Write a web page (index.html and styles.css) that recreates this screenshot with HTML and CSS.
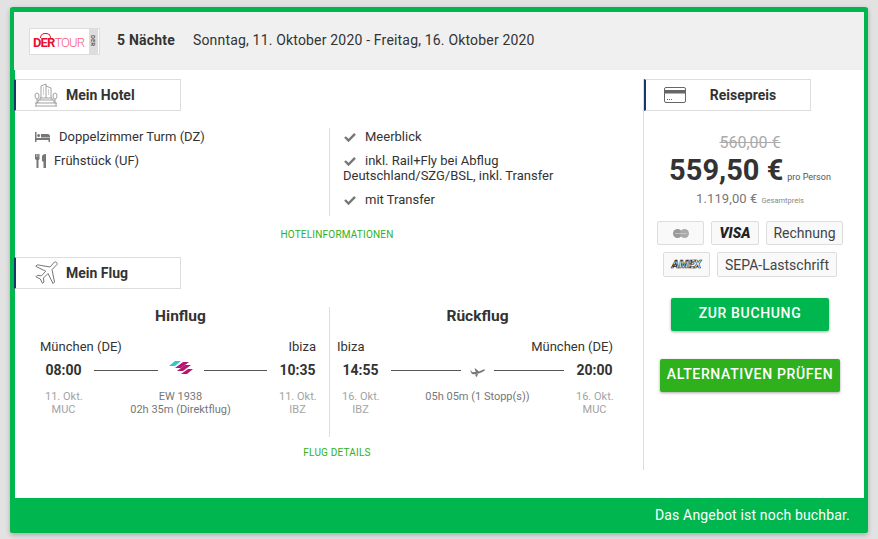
FILE: index.html

```html
<!DOCTYPE html>
<html lang="de">
<head>
    <meta charset="UTF-8">
    <meta name="viewport" content="width=device-width, initial-scale=1.0">
    <title>Angebot</title>
    <link rel="stylesheet" href="styles.css">
</head>
<body>
    <div class="card">
        <div class="head">
            <div class="logo">
                <span class="logo-name"><b>DER</b>TOUR</span>
                <span class="logo-strip">DER</span>
            </div>
            <span class="nights">5 Nächte</span>
            <span class="dates">Sonntag, 11. Oktober 2020 - Freitag, 16. Oktober 2020</span>
        </div>

        <div class="content">
            <div class="main">
                <div class="title">
                    <svg class="title-icon" width="24" height="24" viewBox="0 0 24 24" fill="none" stroke="#8a8a8a" stroke-width="0.8">
                        <path d="M7 15V3l5-2v14M12 3l5 2v10M9 5h1M9 7h1M9 9h1M9 11h1M14 7h1M14 9h1M14 11h1"/>
                        <path d="M1 20h22M2 23v-3M22 23v-3M4 20v-3h16v3M6 17v-2h12v2"/>
                        <ellipse cx="3" cy="13" rx="2" ry="3"/>
                        <ellipse cx="21" cy="13" rx="2" ry="3"/>
                        <path d="M3 16v4M21 16v4M1 23h22"/>
                    </svg>
                    <span>Mein Hotel</span>
                </div>
                <div class="hotel">
                    <ul class="hotel-left">
                        <li class="room">
                            <svg class="bed" width="15" height="10" viewBox="0 0 15 10" fill="#777">
                                <path d="M0 0h1.500v6H15v4h-1.500V8h-12v2H0z"/>
                                <circle cx="3.600" cy="3.400" r="1.500"/>
                                <path d="M6 2h6.500A2.500 2.500 0 0 1 15 4.500V5.500H6z"/>
                            </svg>
                            Doppelzimmer Turm (DZ)
                        </li>
                        <li class="meal">
                            <svg class="fork" width="11" height="14" viewBox="0 0 11 14" fill="#777">
                                <path d="M0 0h1.200v3h.4V0h1.200v3h.4V0h1.300v5L3.500 6.200V14H1.500V6.200L0 5z"/>
                                <path d="M7 7V2.500C7 1 8.500 0 10.500 0H11v14H8.500V8z"/>
                            </svg>
                            Frühstück (UF)
                        </li>
                    </ul>
                    <ul class="hotel-right">
                        <li><svg class="check" width="12" height="10" viewBox="0 0 12 10"><path d="M1 5l3.500 3.500L11 1.800" fill="none" stroke="#777" stroke-width="2.400"/></svg>Meerblick</li>
                        <li><svg class="check" width="12" height="10" viewBox="0 0 12 10"><path d="M1 5l3.500 3.500L11 1.800" fill="none" stroke="#777" stroke-width="2.400"/></svg>inkl. Rail+Fly bei Abflug Deutschland/SZG/BSL, inkl. Transfer</li>
                        <li><svg class="check" width="12" height="10" viewBox="0 0 12 10"><path d="M1 5l3.500 3.500L11 1.800" fill="none" stroke="#777" stroke-width="2.400"/></svg>mit Transfer</li>
                    </ul>
                </div>
                <a class="more hotel-more">HOTELINFORMATIONEN</a>

                <div class="title">
                    <svg class="title-icon" width="24" height="24" viewBox="0 0 24 24" fill="none" stroke="#666" stroke-width="0.9">
                        <path d="M20.500 1c1.500-.6 3.200.9 2.500 2.500L18 8.500 20.500 21 19 22.500l-5-10-4.500 4.500.4 4-1.400 1.400-2.200-4.400-4.400-2.200L3.300 14.400l4 .4 4.500-4.500-10-5L3.300 3.800 16 6z"/>
                    </svg>
                    <span>Mein Flug</span>
                </div>
                <div class="flights">
                    <div class="leg leg-out">
                        <h3>Hinflug</h3>
                        <div class="cities"><span>München (DE)</span><span>Ibiza</span></div>
                        <div class="times">
                            <div class="stop">
                                <strong>08:00</strong>
                                <small>11. Okt.<br>MUC</small>
                            </div>
                            <div class="route">
                                <div class="route-line">
                                    <i></i>
                                    <svg class="airline" width="26" height="14" viewBox="0 0 26 14">
                                        <path d="M1 6l6-5h6L7 6z" fill="#35c3d8"/>
                                        <path d="M7 8l8-6h6l-8 6z" fill="#b5176e"/>
                                        <path d="M9 11l8-6h6l-8 6z" fill="#b5176e"/>
                                        <path d="M13 14l7-5h5l-6 5z" fill="#b5176e"/>
                                    </svg>
                                    <i></i>
                                </div>
                                <small>EW 1938<br>02h 35m (Direktflug)</small>
                            </div>
                            <div class="stop">
                                <strong>10:35</strong>
                                <small>11. Okt.<br>IBZ</small>
                            </div>
                        </div>
                    </div>
                    <div class="leg leg-back">
                        <h3>Rückflug</h3>
                        <div class="cities"><span>Ibiza</span><span>München (DE)</span></div>
                        <div class="times">
                            <div class="stop">
                                <strong>14:55</strong>
                                <small>16. Okt.<br>IBZ</small>
                            </div>
                            <div class="route">
                                <div class="route-line">
                                    <i></i>
                                    <svg class="plane" width="15" height="10" viewBox="0 0 15 10" fill="#777">
                                        <path d="M0 3.500l1 .2 1.500 1.500 3.300-.4L4.500 1.500h1l3.500 3 4-1.800c1-.4 2-.2 2 .2 0 .6-3 2.300-5 3.100C8 7 4 7.500 2 7z"/>
                                        <path d="M5 7.500l3-.8-1 3H6z"/>
                                    </svg>
                                    <i></i>
                                </div>
                                <small>05h 05m (1 Stopp(s))</small>
                            </div>
                            <div class="stop">
                                <strong>20:00</strong>
                                <small>16. Okt.<br>MUC</small>
                            </div>
                        </div>
                    </div>
                </div>
                <a class="more flight-more">FLUG DETAILS</a>
            </div>

            <div class="side">
                <div class="title">
                    <svg class="title-icon card-icon" width="22" height="16" viewBox="0 0 22 16">
                        <rect x="0.500" y="0.500" width="21" height="15" rx="1.500" fill="none" stroke="#666"/>
                        <rect x="0.500" y="3" width="21" height="3.500" fill="#666"/>
                        <path d="M3 12.500h1M5 12.500h1M7 12.500h1" stroke="#666"/>
                    </svg>
                    <span class="title-center">Reisepreis</span>
                </div>
                <div class="prices">
                    <div class="old-price">560,00 €</div>
                    <div class="price">559,50 €<small>pro Person</small></div>
                    <div class="total">1.119,00 €<small>Gesamtpreis</small></div>
                </div>
                <div class="pays">
                    <div class="pay pay-mc">
                        <svg width="18" height="9" viewBox="0 0 18 9"><circle cx="5.500" cy="4.500" r="4.500" fill="#999"/><circle cx="12.500" cy="4.500" r="4.500" fill="#aaa"/><path d="M3 4.500h12" stroke="#ccc" stroke-width="0.800"/></svg>
                    </div>
                    <div class="pay pay-visa">VISA</div>
                    <div class="pay pay-text">Rechnung</div>
                </div>
                <div class="pays">
                    <div class="pay pay-amex">AMEX</div>
                    <div class="pay pay-text pay-sepa">SEPA-Lastschrift</div>
                </div>
                <button class="btn btn-book">ZUR BUCHUNG</button>
                <button class="btn btn-alt">ALTERNATIVEN PRÜFEN</button>
            </div>
        </div>

        <div class="foot">Das Angebot ist noch buchbar.</div>
    </div>
</body>
</html>
```

FILE: styles.css

```css
* {
    box-sizing: border-box;
}
body {
    margin: 0;
    padding: 7px 10px 0;
    height: 539px;
    overflow: hidden;
    background-color: #e2e2e2;
    font-family: Roboto, Arial, sans-serif;
    font-size: 13px;
    color: #333;
}
.card {
    width: 858px;
    height: 526px;
    display: flex;
    flex-direction: column;
    background-color: #fff;
    border: solid #00b74f;
    border-width: 5px 4px 0 5px;
    border-radius: 3px;
    box-shadow: 0 2px 5px rgba(0, 0, 0, 0.25);
}
.head {
    height: 58px;
    display: flex;
    align-items: center;
    padding-left: 14px;
    margin-left: -1px;
    background-color: #f0f0f0;
    flex-shrink: 0;
}
.logo {
    width: 71px;
    height: 27px;
    margin-left: 1px;
    display: flex;
    justify-content: space-between;
    background-color: #fff;
    border: 1px solid #ddd;
}
.logo-name {
    padding: 6px 0 0 3px;
    font-size: 13px;
    line-height: 16px;
    font-weight: 300;
    letter-spacing: -0.9px;
    color: #f4607a;
}
.logo-name b {
    position: relative;
    font-weight: 700;
    color: #e8102e;
}
.logo-name b::before {
    content: "";
    position: absolute;
    left: 7px;
    top: -2px;
    width: 9px;
    height: 4px;
    border: 1.500px solid #e8102e;
    border-bottom: none;
    border-radius: 5px 5px 0 0;
}
.logo-strip {
    width: 9px;
    margin-right: 1px;
    background-color: #ddd;
    color: #555;
    font-size: 6px;
    font-weight: 700;
    line-height: 9px;
    text-align: center;
    writing-mode: vertical-rl;
}
.nights {
    margin: 0 0 2px 17px;
    font-size: 14px;
    font-weight: 700;
    letter-spacing: 0.2px;
}
.dates {
    margin: 0 0 2px 18px;
    font-size: 14px;
    letter-spacing: 0.18px;
}
.content {
    flex: 1;
    display: flex;
    min-height: 0;
}
.main {
    width: 628px;
    padding-top: 9px;
    flex-shrink: 0;
}
.side {
    width: 221px;
    margin-top: 9px;
    height: 391px;
    padding-right: 8px;
    border-left: 1px solid #ddd;
}
.title {
    width: 167px;
    height: 32px;
    display: flex;
    align-items: center;
    margin-left: -1px;
    padding-left: 18px;
    background-color: #fff;
    border: 1px solid #ddd;
    border-left: 2px solid #17376b;
    font-size: 14px;
    font-weight: 700;
}
.title-icon {
    flex-shrink: 0;
    margin-right: 8px;
}
.side .title {
    margin-left: 0;
}
.card-icon {
    margin-right: 0;
}
.title-center {
    flex: 1;
    padding-right: 10px;
    text-align: center;
}
ul {
    list-style: none;
    margin: 0;
    padding: 0;
}
.hotel {
    display: flex;
    height: 88px;
    margin-top: 17px;
}
.hotel-left {
    width: 315px;
    padding: 1px 0 0 20px;
    border-right: 1px solid #ddd;
}
.hotel-left li {
    display: flex;
    align-items: center;
    height: 15px;
    margin-bottom: 9px;
}
.bed {
    margin-right: 9px;
}
.fork {
    margin-right: 8px;
}
.hotel-right {
    padding: 1px 70px 0 13px;
    flex: 1;
    line-height: 15px;
}
.hotel-right li {
    margin-bottom: 9px;
}
.check {
    margin: 0 9px 0 1px;
    vertical-align: -1px;
}
.more {
    display: block;
    text-align: center;
    font-size: 10px;
    line-height: 12px;
    letter-spacing: 0.2px;
    color: #2eb11c;
}
.hotel-more {
    height: 41px;
    padding-top: 13px;
    padding-left: 16px;
}
.flights {
    display: flex;
    height: 130px;
    margin-top: 18px;
}
.leg {
    width: 313px;
}
.leg-out {
    padding: 0 13px 0 25px;
    border-right: 1px solid #ddd;
    width: 315px;
}
.leg-back {
    padding: 0 30px 0 7px;
}
h3 {
    margin: 0 0 14px;
    padding-left: 5px;
    font-size: 15.500px;
    line-height: 18px;
    font-weight: 700;
    text-align: center;
}
.cities {
    display: flex;
    justify-content: space-between;
    line-height: 15px;
    margin-bottom: 8px;
}
.times {
    display: flex;
    padding-left: 5px;
}
.stop {
    width: 37px;
    flex-shrink: 0;
    text-align: center;
}
.stop strong {
    display: block;
    font-size: 14px;
    line-height: 17px;
    margin-bottom: 11px;
}
small {
    display: block;
    font-size: 11px;
    line-height: 13px;
    color: #a3a3a3;
    white-space: nowrap;
}
.route {
    flex: 1;
    padding: 0 12px;
    text-align: center;
}
.route small {
    color: #777;
}
.route-line {
    display: flex;
    align-items: center;
    height: 17px;
    margin-bottom: 11px;
}
.route-line i {
    flex: 1;
    height: 1px;
    background-color: #555;
}
.airline {
    margin: -7px 10px 0;
}
.plane {
    margin: 2px 9px 0;
}
.flight-more {
    padding-top: 10px;
    padding-left: 16px;
}
.prices {
    margin-top: 23px;
    text-align: center;
}
.old-price {
    font-size: 16px;
    line-height: 17px;
    color: #aaa;
    text-decoration: line-through;
}
.price {
    display: flex;
    justify-content: center;
    align-items: baseline;
    margin-top: 1px;
    font-size: 29px;
    line-height: 36px;
    font-weight: 700;
}
.price small {
    margin-left: 4px;
    font-size: 9px;
    font-weight: 400;
    color: #555;
}
.total {
    display: flex;
    justify-content: center;
    align-items: baseline;
    margin-top: 3px;
    font-size: 13px;
    line-height: 15px;
    letter-spacing: 0.1px;
    color: #777;
}
.total small {
    margin-left: 4px;
    font-size: 7.500px;
    letter-spacing: 0;
    color: #888;
}
.pays {
    display: flex;
    justify-content: center;
    gap: 7px;
    margin-top: 7px;
}
.prices + .pays {
    margin-top: 14px;
}
.pay {
    height: 24px;
    width: 47px;
    display: flex;
    align-items: center;
    justify-content: center;
    background-color: #f9f9f9;
    border: 1px solid #ddd;
    border-radius: 2px;
}
.pay-visa {
    width: 48px;
    font-size: 14px;
    font-weight: 900;
    font-style: italic;
    color: #222;
}
.pay-text {
    width: 77px;
    font-size: 14px;
    color: #444;
}
.pay-sepa {
    width: 120px;
}
.pay-amex {
    font-size: 11px;
    font-weight: 900;
    font-style: italic;
    color: #fff;
    -webkit-text-stroke: 0.6px #222;
}
.pays + .pays .pay {
    height: 25px;
}
.btn {
    display: block;
    margin: 0 auto;
    padding: 0 0 4px;
    border: none;
    border-radius: 2px;
    color: #fff;
    font-family: Roboto, Arial, sans-serif;
    font-size: 14px;
    font-weight: 500;
    letter-spacing: 0.65px;
    box-shadow: 0 1px 3px rgba(0, 0, 0, 0.35);
}
.btn-book {
    width: 158px;
    height: 33px;
    margin-top: 21px;
    background-color: #00b74f;
}
.btn-alt {
    width: 180px;
    height: 33px;
    margin-top: 28px;
    background-color: #2eb11c;
}
.foot {
    height: 35px;
    flex-shrink: 0;
    margin: 0 -4px 0 -5px;
    padding: 3px 18px 0 0;
    background-color: #00b74f;
    border-radius: 0 0 3px 3px;
    color: #fff;
    font-size: 14px;
    line-height: 29px;
    letter-spacing: 0.17px;
    text-align: right;
}
```
